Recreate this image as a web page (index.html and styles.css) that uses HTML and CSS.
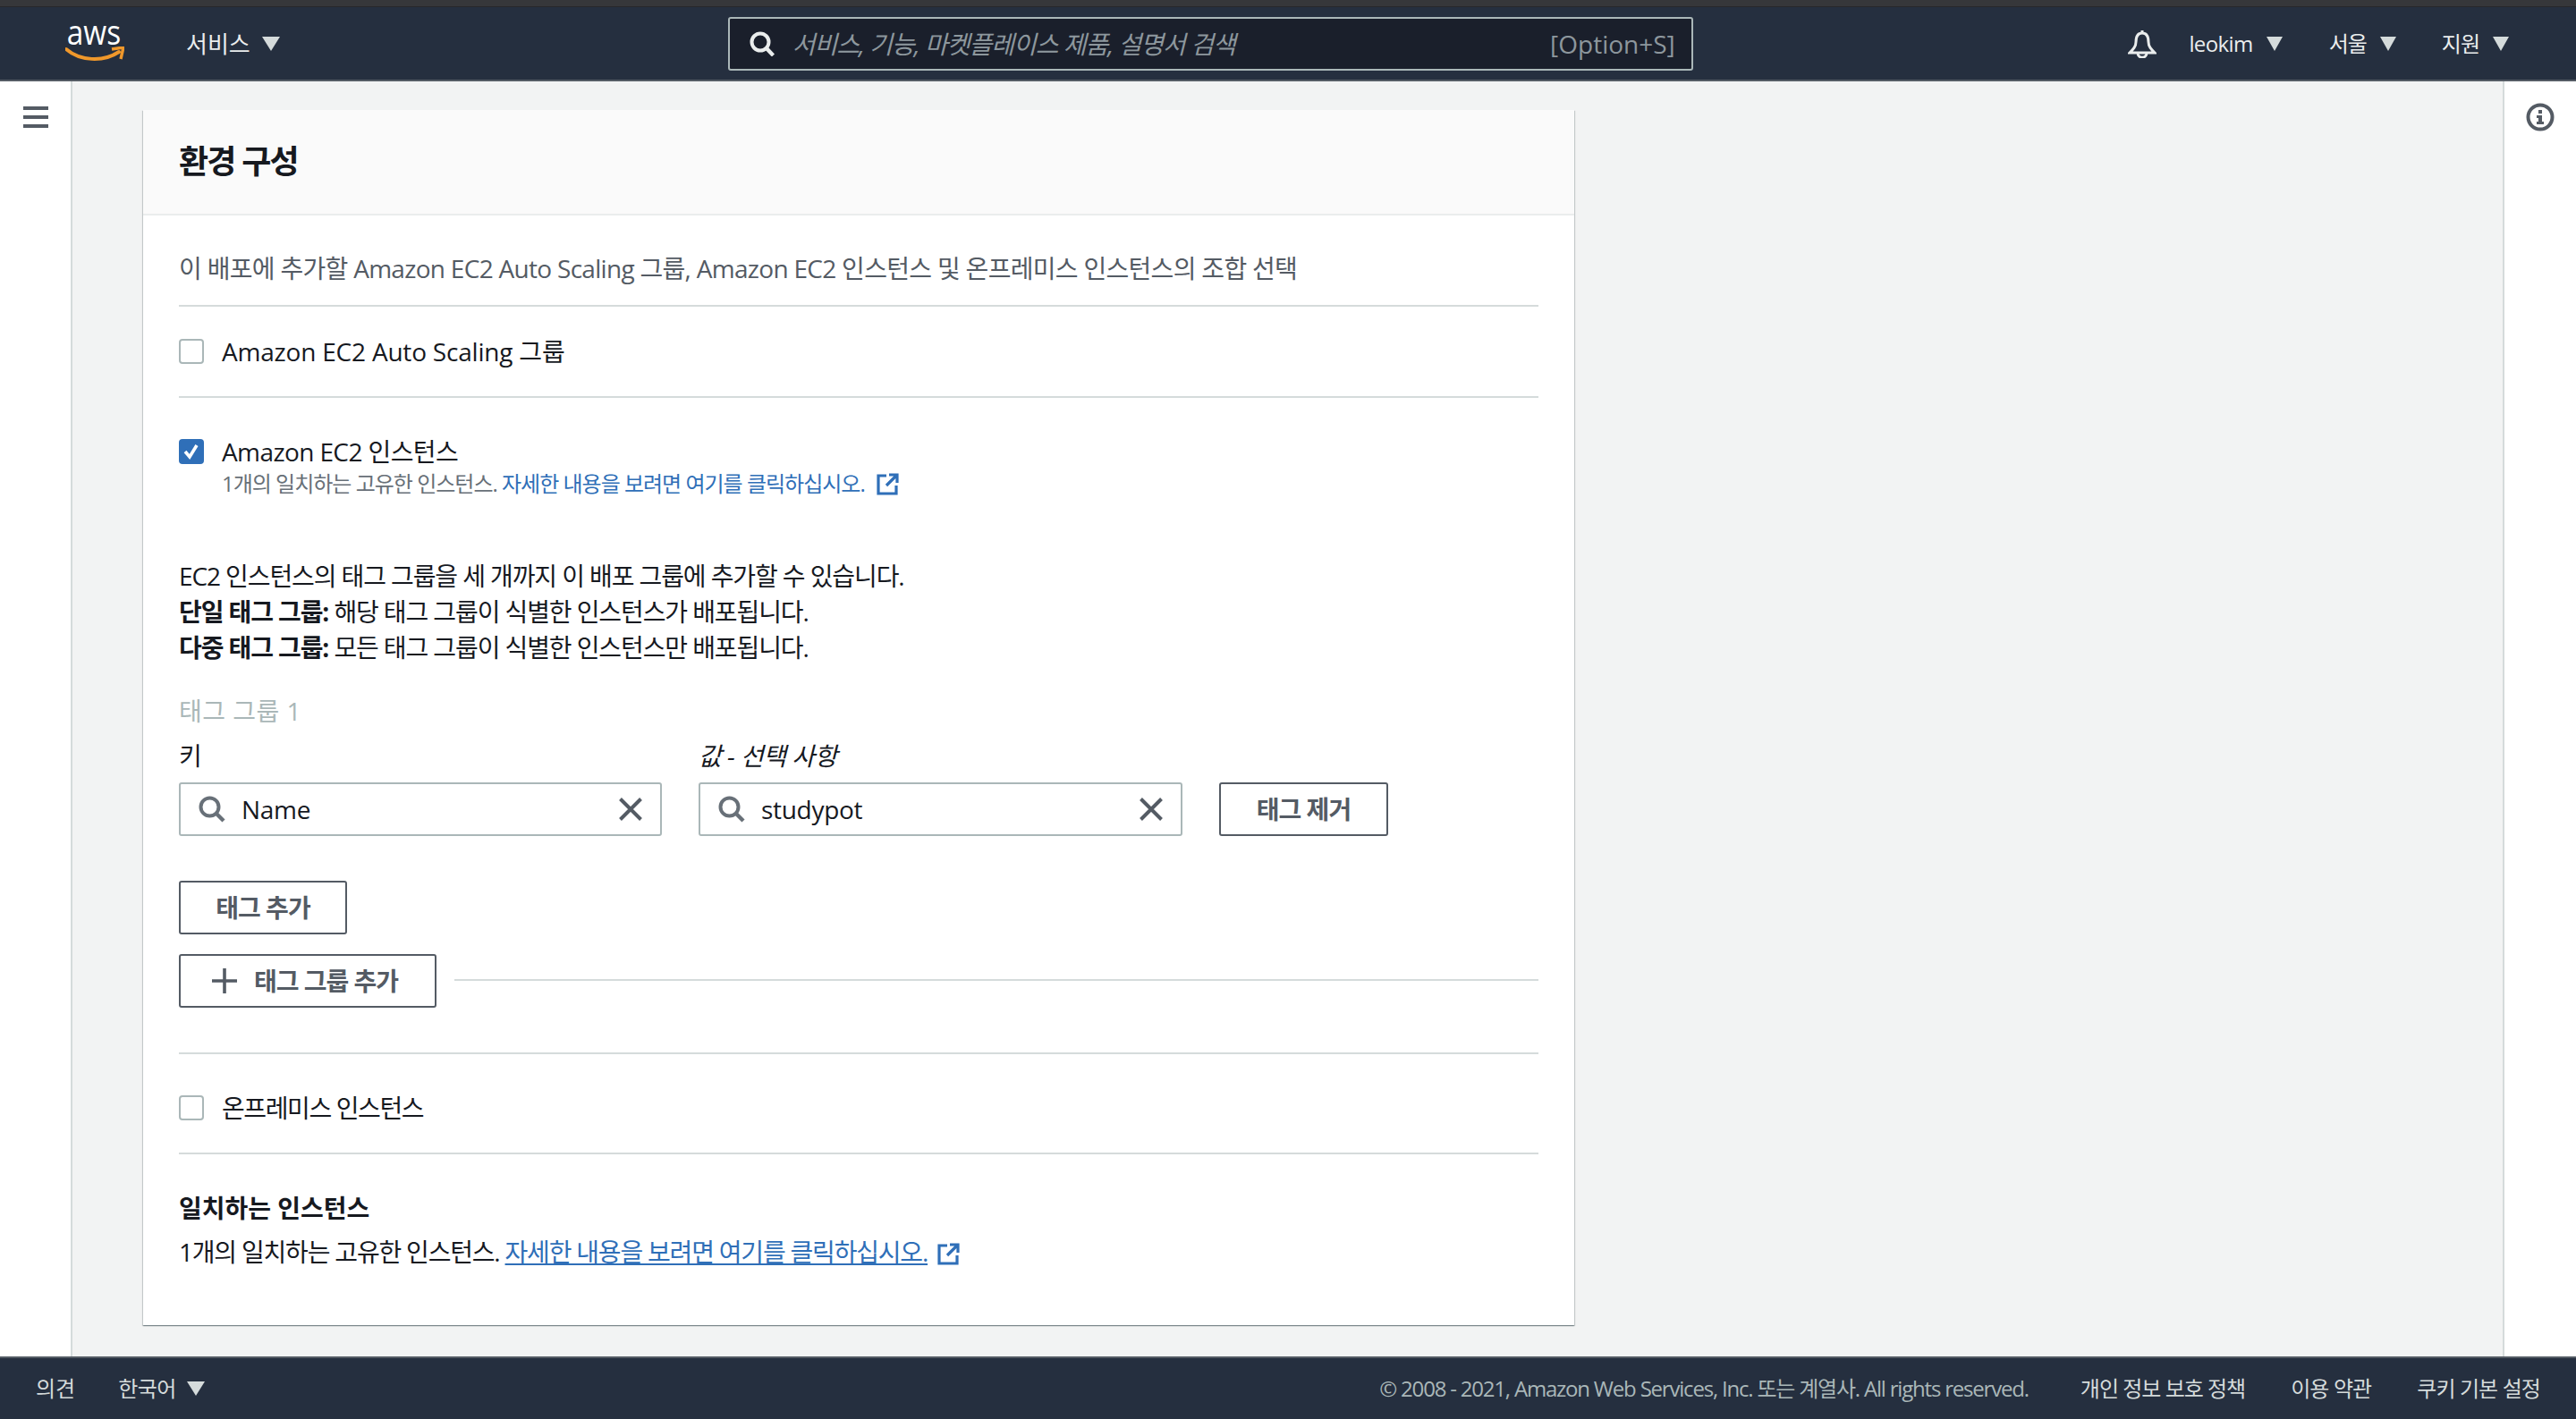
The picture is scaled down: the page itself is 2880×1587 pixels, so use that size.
FILE: index.html
```html
<!DOCTYPE html>
<html lang="ko">
<head>
	<meta charset="UTF-8">
	<title>환경 구성</title>
	<link rel="stylesheet" href="styles.css">
</head>
<body>
	<div class="strip"></div>
	<header class="nav">
		<div class="logo">
			<span class="logo-text">aws</span>
			<svg class="logo-smile" width="66" height="18" viewBox="0 24 66 18">
				<path d="M1 27 C16 40 42 42 60 30" fill="none" stroke="#f0982b" stroke-width="4" stroke-linecap="round"/>
				<path d="M52 27 L65 25 L62 38" fill="none" stroke="#f0982b" stroke-width="3.4"/>
			</svg>
		</div>
		<div class="nav-item services">서비스<span class="caret"></span></div>
		<div class="search">
			<svg class="search-icon" width="28" height="28" viewBox="0 0 28 28"><circle cx="12" cy="12" r="9.5" fill="none" stroke="#eaeded" stroke-width="4"/><path d="M18.5 18.5 L26.5 27" stroke="#eaeded" stroke-width="4.4"/></svg>
			<span class="search-hint">서비스, 기능, 마켓플레이스 제품, 설명서 검색</span>
			<span class="search-key">[Option+S]</span>
		</div>
		<div class="nav-right">
			<svg class="bell" width="32" height="32" viewBox="0 0 32 32"><path d="M16 1 V4 M16 4 C10 4 9 9 9 14 C9 19 6 22 2 26 H30 C26 22 23 19 23 14 C23 9 22 4 16 4 Z M11 26 C11 33 21 33 21 26" fill="none" stroke="#eaeded" stroke-width="3"/></svg>
			<div class="nav-item small user">leokim<span class="caret"></span></div>
			<div class="nav-item small region">서울<span class="caret"></span></div>
			<div class="nav-item small support">지원<span class="caret"></span></div>
		</div>
	</header>

	<div class="main">
		<aside class="side-left">
			<div class="burger"><i></i><i></i><i></i></div>
		</aside>
		<div class="content">
			<section class="card">
				<div class="card-head">환경 구성</div>
				<div class="card-body">
					<p class="desc">이 배포에 추가할 Amazon EC2 Auto Scaling 그룹, Amazon EC2 인스턴스 및 온프레미스 인스턴스의 조합 선택</p>
					<div class="rule first"></div>
					<div class="check-row asg">
						<span class="box"></span>
						<div class="check-text">Amazon EC2 Auto Scaling 그룹</div>
					</div>
					<div class="rule"></div>
					<div class="check-row ec2">
						<span class="box checked"><svg width="28" height="28" viewBox="0 0 28 28"><path d="M7 14 L12 20 L20 7" fill="none" stroke="#fff" stroke-width="3.6"/></svg></span>
						<div class="check-text">
							Amazon EC2 인스턴스
							<div class="check-sub">1개의 일치하는 고유한 인스턴스. <a class="link-plain">자세한 내용을 보려면 여기를 클릭하십시오.</a><svg class="ext" width="25" height="25" viewBox="0 0 25 25"><path d="M11 3 H2 V23 H22 V14 M14 2 H23 V11 M23 2 L11 14" fill="none" stroke="#2f6fb8" stroke-width="3.2"/></svg></div>
						</div>
					</div>

					<div class="info">
						<p>EC2 인스턴스의 태그 그룹을 세 개까지 이 배포 그룹에 추가할 수 있습니다.</p>
						<p><b>단일 태그 그룹:</b> 해당 태그 그룹이 식별한 인스턴스가 배포됩니다.</p>
						<p><b>다중 태그 그룹:</b> 모든 태그 그룹이 식별한 인스턴스만 배포됩니다.</p>
					</div>

					<div class="group-title">태그 그룹 1</div>
					<div class="tag-grid">
						<label>키</label>
						<label class="opt">값 - 선택 사항</label>
						<span></span>
						<div class="field">
							<svg class="field-search" width="30" height="30" viewBox="0 0 30 30"><circle cx="12.5" cy="12.5" r="10" fill="none" stroke="#687078" stroke-width="4"/><path d="M20 20 L28 28" stroke="#687078" stroke-width="4.4"/></svg>
							<span class="field-val">Name</span>
							<svg class="field-x" width="26" height="26" viewBox="0 0 26 26"><path d="M1.5 1.5 L24.5 24.5 M24.5 1.5 L1.5 24.5" stroke="#545b64" stroke-width="4"/></svg>
						</div>
						<div class="field">
							<svg class="field-search" width="30" height="30" viewBox="0 0 30 30"><circle cx="12.5" cy="12.5" r="10" fill="none" stroke="#687078" stroke-width="4"/><path d="M20 20 L28 28" stroke="#687078" stroke-width="4.4"/></svg>
							<span class="field-val">studypot</span>
							<svg class="field-x" width="26" height="26" viewBox="0 0 26 26"><path d="M1.5 1.5 L24.5 24.5 M24.5 1.5 L1.5 24.5" stroke="#545b64" stroke-width="4"/></svg>
						</div>
						<div class="btn btn-remove">태그 제거</div>
					</div>
					<div class="btn btn-add">태그 추가</div>
					<div class="group-row">
						<div class="btn btn-group">
							<svg width="28" height="28" viewBox="0 0 28 28"><path d="M14 0 V28 M0 14 H28" stroke="#545b64" stroke-width="3.6"/></svg>
							태그 그룹 추가
						</div>
						<div class="group-line"></div>
					</div>
					<div class="rule after-group"></div>
					<div class="check-row onprem">
						<span class="box"></span>
						<div class="check-text">온프레미스 인스턴스</div>
					</div>
					<div class="rule"></div>

					<h3 class="match-title">일치하는 인스턴스</h3>
					<p class="match-text">1개의 일치하는 고유한 인스턴스. <a class="link">자세한 내용을 보려면 여기를 클릭하십시오.</a><svg class="ext" width="25" height="25" viewBox="0 0 25 25"><path d="M11 3 H2 V23 H22 V14 M14 2 H23 V11 M23 2 L11 14" fill="none" stroke="#2f6fb8" stroke-width="3.2"/></svg></p>
				</div>
			</section>
		</div>
		<aside class="side-right">
			<svg width="32" height="32" viewBox="0 0 32 32"><circle cx="16" cy="16" r="13.5" fill="none" stroke="#545b64" stroke-width="4"/><path d="M14 8 H18 V12 H14 Z M12 14 H18 V21 H20 V24 H12 V21 H14 V17 H12 Z" fill="#545b64"/></svg>
		</aside>
	</div>

	<footer class="foot">
		<span class="foot-feedback">의견</span>
		<span class="foot-lang">한국어<span class="caret"></span></span>
		<div class="foot-right">
			<span class="copy">© 2008 - 2021, Amazon Web Services, Inc. 또는 계열사. All rights reserved.</span>
			<span class="foot-link privacy">개인 정보 보호 정책</span>
			<span class="foot-link terms">이용 약관</span>
			<span class="foot-link cookie">쿠키 기본 설정</span>
		</div>
	</footer>
</body>
</html>
```

FILE: styles.css
```css
* {
	padding: 0;
	margin: 0;
	box-sizing: border-box;
}
html, body {
	height: 100%;
}
body {
	display: flex;
	flex-direction: column;
	height: 1587px;
	overflow: hidden;
	font-family: "Open Sans", "Noto Sans CJK KR", sans-serif;
	font-size: 28px;
	line-height: 40px;
	color: #16191f;
	background: #f2f3f3;
}

/* top bar */
.strip {
	height: 8px;
	background: #36373a;
	border-bottom: 1px solid #26272a;
}
.nav {
	display: flex;
	align-items: center;
	height: 83px;
	padding-left: 73px;
	background: #252f3f;
	border-bottom: 2px solid #545b64;
	color: #eaeded;
}
.logo {
	display: flex;
	flex-direction: column;
	width: 66px;
	margin-bottom: 8px;
}
.logo-text {
	display: block;
	padding-left: 2px;
	font-size: 38px;
	line-height: 30px;
	color: #fff;
	transform: scaleX(.88);
	transform-origin: left;
}
.logo-smile {
	display: block;
	margin-top: 2px;
}
.nav-item {
	display: flex;
	align-items: center;
	font-size: 26px;
	line-height: 40px;
}
.caret {
	display: inline-block;
	width: 0;
	height: 0;
	margin-left: 13px;
	border-left: 10px solid transparent;
	border-right: 10px solid transparent;
	border-top: 16px solid #d5dbdb;
}
.services {
	margin-left: 69px;
}
.search {
	display: flex;
	align-items: center;
	width: 1079px;
	height: 60px;
	margin-left: 501px;
	padding: 0 18px 0 22px;
	background: #1a1f2b;
	border: 2px solid #aab7b8;
	border-radius: 3px;
}
.search-hint {
	margin-left: 20px;
	font-style: italic;
	font-size: 28px;
	letter-spacing: -1px;
	color: #8d979d;
}
.search-key {
	margin-left: auto;
	font-size: 28px;
	color: #8d979d;
}
.nav-right {
	display: flex;
	align-items: center;
	margin-left: auto;
	padding-right: 75px;
}
.small {
	font-size: 24px;
	letter-spacing: -1px;
}
.small .caret {
	margin-left: 15px;
	border-left-width: 9px;
	border-right-width: 9px;
}
.user {
	margin-left: 36px;
	letter-spacing: -.6px;
}
.region {
	margin-left: 52px;
}
.support {
	margin-left: 51px;
}

/* page body */
.main {
	display: flex;
	flex: 1;
	min-height: 0;
}
.side-left {
	width: 81px;
	padding: 28px 0 0 26px;
	background: #fff;
	border-right: 2px solid #d5dbdb;
}
.burger {
	display: flex;
	flex-direction: column;
	gap: 6px;
	width: 28px;
}
.burger i {
	display: block;
	height: 4px;
	background: #545b64;
}
.side-right {
	width: 82px;
	padding: 24px 0 0 24px;
	background: #fff;
	border-left: 2px solid #d5dbdb;
}
.content {
	flex: 1;
	padding: 32px 0 0 79px;
}
.card {
	width: 1600px;
	height: 1359px;
	background: #fff;
	box-shadow: 0 1px 1px 0 rgba(0, 28, 36, .3), 1px 1px 1px 0 rgba(0, 28, 36, .15), -1px 1px 1px 0 rgba(0, 28, 36, .15);
}
.card-head {
	height: 118px;
	padding: 0 40px;
	font-size: 36px;
	font-weight: 700;
	letter-spacing: -1.8px;
	line-height: 116px;
	background: #fafafa;
	border-bottom: 2px solid #eaeded;
}
.card-body {
	padding: 39px 40px 0;
}
.desc {
	letter-spacing: -.7px;
	color: #545b64;
}
.rule {
	height: 2px;
	background: #d5dbdb;
}
.rule.first {
	margin-top: 21px;
}
.rule.after-group {
	margin-top: 50px;
}
.check-row {
	display: flex;
	gap: 20px;
}
.asg {
	height: 100px;
	padding-top: 30px;
	letter-spacing: -.2px;
}
.ec2 {
	padding-top: 40px;
	letter-spacing: -.6px;
}
.onprem {
	height: 110px;
	padding-top: 40px;
	letter-spacing: -1.4px;
}
.box {
	flex: none;
	width: 28px;
	height: 28px;
	margin-top: 6px;
	background: #fff;
	border: 2px solid #aab7b8;
	border-radius: 4px;
}
.box.checked {
	background: #2f6fb8;
	border: 0;
}
.box svg {
	display: block;
}
.check-sub {
	font-size: 24px;
	line-height: 32px;
	letter-spacing: -1px;
	color: #687078;
}
.link-plain {
	color: #2f6fb8;
}
.link {
	color: #2f6fb8;
	text-decoration: underline;
}
.ext {
	margin-left: 13px;
	vertical-align: -4px;
}
.info {
	margin-top: 67px;
	letter-spacing: -1.1px;
}
.group-title {
	margin-top: 31px;
	letter-spacing: .5px;
	color: #aab7b8;
}
.tag-grid {
	display: grid;
	grid-template-columns: 540px 541px auto;
	column-gap: 41px;
	row-gap: 10px;
	justify-content: start;
	margin-top: 10px;
}
.opt {
	font-style: italic;
	letter-spacing: -.5px;
}
.field {
	display: flex;
	align-items: center;
	height: 60px;
	padding: 0 20px 0 20px;
	border: 2px solid #aab7b8;
	border-radius: 3px;
}
.field-val {
	margin-left: 18px;
	letter-spacing: -.3px;
}
.field-x {
	margin-left: auto;
}
.btn {
	display: flex;
	align-items: center;
	justify-content: center;
	height: 60px;
	font-weight: 700;
	letter-spacing: -1px;
	color: #545b64;
	background: #fff;
	border: 2px solid #545b64;
	border-radius: 3px;
}
.btn-remove {
	width: 189px;
}
.btn-add {
	width: 188px;
	margin-top: 50px;
}
.group-row {
	display: flex;
	align-items: center;
	margin-top: 22px;
}
.btn-group {
	gap: 19px;
	width: 288px;
	padding-right: 6px;
}
.group-line {
	flex: 1;
	height: 2px;
	margin: 0 0 2px 20px;
	background: #d5dbdb;
}
.match-title {
	margin-top: 40px;
	font-size: 28px;
	font-weight: 700;
}
.match-text {
	margin-top: 9px;
	letter-spacing: -1.2px;
}
.match-text .ext {
	margin-left: 11px;
}

/* footer */
.foot {
	display: flex;
	align-items: center;
	height: 70px;
	padding-left: 40px;
	font-size: 24px;
	color: #d5dbdb;
	background: #252f3f;
	border-top: 2px solid #545b64;
}
.foot-lang {
	display: flex;
	align-items: center;
	margin-left: 48px;
	letter-spacing: -.6px;
}
.foot-lang .caret {
	margin-left: 12px;
}
.foot-right {
	display: flex;
	align-items: center;
	margin-left: auto;
	padding-right: 40px;
	letter-spacing: -.9px;
}
.copy {
	letter-spacing: -1.2px;
	color: #aab7b8;
}
.foot-link {
	margin-left: 51px;
}
.privacy {
	margin-left: 58px;
	letter-spacing: -1px;
}
```
